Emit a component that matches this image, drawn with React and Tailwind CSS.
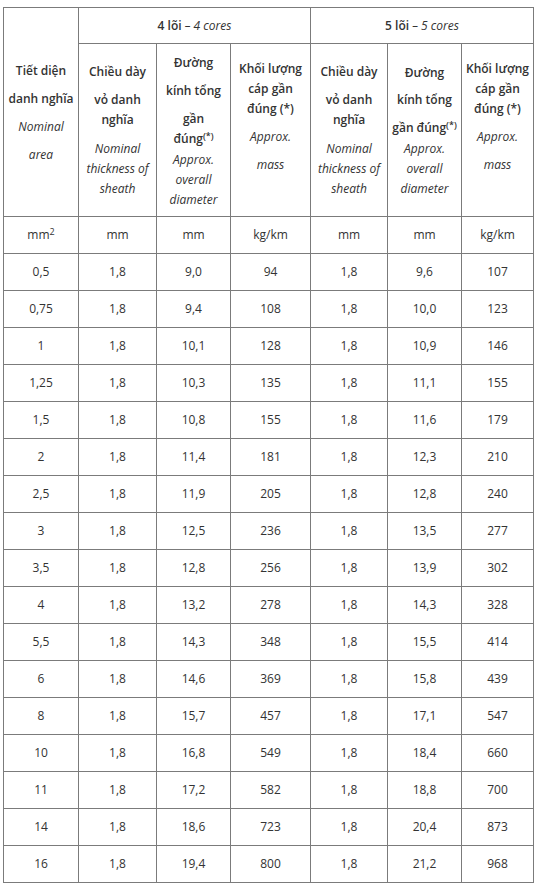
import React from "react";

const rows = [
  ["0,5", "1,8", "9,0", "94", "1,8", "9,6", "107"],
  ["0,75", "1,8", "9,4", "108", "1,8", "10,0", "123"],
  ["1", "1,8", "10,1", "128", "1,8", "10,9", "146"],
  ["1,25", "1,8", "10,3", "135", "1,8", "11,1", "155"],
  ["1,5", "1,8", "10,8", "155", "1,8", "11,6", "179"],
  ["2", "1,8", "11,4", "181", "1,8", "12,3", "210"],
  ["2,5", "1,8", "11,9", "205", "1,8", "12,8", "240"],
  ["3", "1,8", "12,5", "236", "1,8", "13,5", "277"],
  ["3,5", "1,8", "12,8", "256", "1,8", "13,9", "302"],
  ["4", "1,8", "13,2", "278", "1,8", "14,3", "328"],
  ["5,5", "1,8", "14,3", "348", "1,8", "15,5", "414"],
  ["6", "1,8", "14,6", "369", "1,8", "15,8", "439"],
  ["8", "1,8", "15,7", "457", "1,8", "17,1", "547"],
  ["10", "1,8", "16,8", "549", "1,8", "18,4", "660"],
  ["11", "1,8", "17,2", "582", "1,8", "18,8", "700"],
  ["14", "1,8", "18,6", "723", "1,8", "20,4", "873"],
  ["16", "1,8", "19,4", "800", "1,8", "21,2", "968"],
];

const Star = () => <sup className="text-[9px] font-semibold">(*)</sup>;

// each line: text, italic?, top margin class
const thickness = [
  { t: "Chiều dày", m: "mt-[18px]" },
  { t: "vỏ danh", m: "mt-[8px]" },
  { t: "nghĩa", m: "mt-0" },
  { t: "Nominal", i: true, m: "mt-[9px]" },
  { t: "thickness of", i: true, m: "mt-0" },
  { t: "sheath", i: true, m: "mt-0" },
];

const mass = [
  { t: "Khối lượng", m: "mt-[15px]" },
  { t: "cáp gần", m: "mt-0" },
  { t: "đúng (*)", m: "mt-0" },
  { t: "Approx.", i: true, m: "mt-[8px]" },
  { t: "mass", i: true, m: "mt-[8px]" },
];

const diam4 = [
  { t: "Đường", m: "mt-[9px]" },
  { t: "kính tổng", m: "mt-[8px]" },
  { t: "gần", m: "mt-[8px]" },
  { t: <>đúng<Star /></>, m: "mt-0" },
  { t: "Approx.", i: true, m: "mt-px" },
  { t: "overall", i: true, m: "mt-0" },
  { t: "diameter", i: true, m: "mt-0" },
];

const diam5 = [
  { t: "Đường", m: "mt-[19px]" },
  { t: "kính tổng", m: "mt-[7px]" },
  { t: <>gần đúng<Star /></>, m: "mt-[8px]" },
  { t: "Approx.", i: true, m: "mt-px" },
  { t: "overall", i: true, m: "mt-0" },
  { t: "diameter", i: true, m: "mt-0" },
];

const area = [
  { t: "Tiết diện", m: "mt-[53px]" },
  { t: "danh nghĩa", m: "mt-[8px]" },
  { t: "Nominal", i: true, m: "mt-[8px]" },
  { t: "area", i: true, m: "mt-[8px]" },
];

const Lines = ({ lines }) => (
  <div className="flex flex-col items-center">
    {lines.map((l, k) => (
      <div
        key={k}
        className={`${l.m} h-[20px] leading-[20px] whitespace-nowrap ${l.i ? "italic font-normal" : "font-semibold"}`}
      >
        {l.t}
      </div>
    ))}
  </div>
);

const cell = "border border-[#7b7b7b] p-0 text-center";

export default function App() {
  return (
    <div className="bg-white min-h-[886px] pl-[3px] pt-[7px] font-['Open_Sans',sans-serif] text-[12px] text-[#333]">
      <table className="table-fixed border-collapse w-[531px]">
        <colgroup>
          <col className="w-[75px]" />
          <col className="w-[78px]" />
          <col className="w-[74px]" />
          <col className="w-[80px]" />
          <col className="w-[77px]" />
          <col className="w-[74px]" />
          <col className="w-[72px]" />
        </colgroup>
        <thead>
          <tr>
            <th rowSpan={2} className={`${cell} align-top`}>
              <Lines lines={area} />
            </th>
            <th colSpan={3} className={`${cell} h-[36px] align-middle`}>
              <span className="font-semibold">4 lõi</span>
              <span className="font-normal italic"> – 4 cores</span>
            </th>
            <th colSpan={3} className={`${cell} h-[36px] align-middle`}>
              <span className="font-semibold">5 lõi</span>
              <span className="font-normal italic"> – 5 cores</span>
            </th>
          </tr>
          <tr>
            <th className={`${cell} h-[173px] align-top`}><Lines lines={thickness} /></th>
            <th className={`${cell} h-[173px] align-top`}><Lines lines={diam4} /></th>
            <th className={`${cell} h-[173px] align-top`}><Lines lines={mass} /></th>
            <th className={`${cell} h-[173px] align-top`}><Lines lines={thickness} /></th>
            <th className={`${cell} h-[173px] align-top`}><Lines lines={diam5} /></th>
            <th className={`${cell} h-[173px] align-top`}><Lines lines={mass} /></th>
          </tr>
        </thead>
        <tbody>
          <tr>
            <td className={`${cell} h-[37px]`}>mm<sup className="text-[9px]">2</sup></td>
            <td className={cell}>mm</td>
            <td className={cell}>mm</td>
            <td className={cell}>kg/km</td>
            <td className={cell}>mm</td>
            <td className={cell}>mm</td>
            <td className={cell}>kg/km</td>
          </tr>
          {rows.map((r, i) => (
            <tr key={i}>
              {r.map((v, j) => (
                <td key={j} className={`${cell} h-[37px]`}>{v}</td>
              ))}
            </tr>
          ))}
        </tbody>
      </table>
    </div>
  );
}
